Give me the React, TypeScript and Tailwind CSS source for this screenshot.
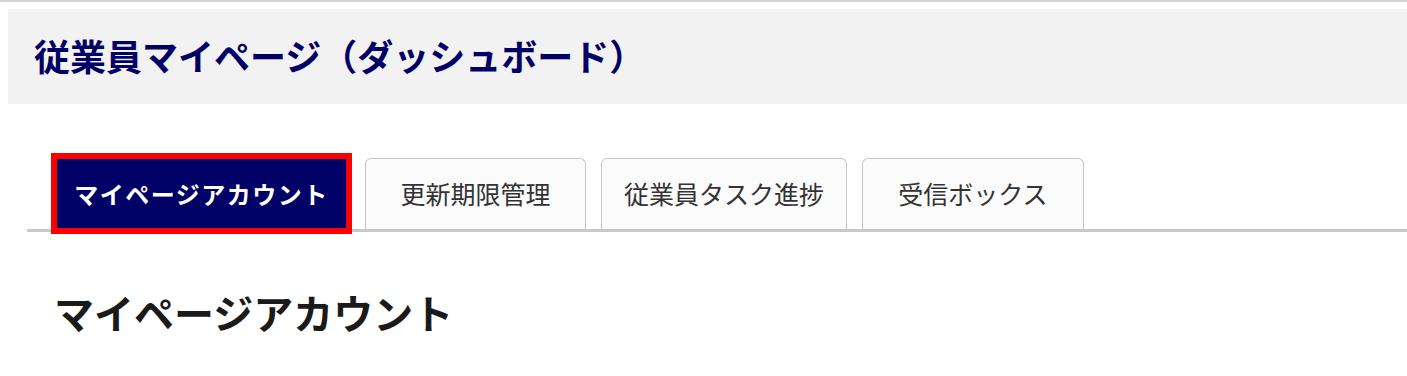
const tabs = [
  { label: "更新期限管理", width: "w-[221px]" },
  { label: "従業員タスク進捗", width: "w-[246px]" },
  { label: "受信ボックス", width: "w-[222px]" },
];

export default function App() {
  return (
    <div
      className="min-h-screen bg-white border-t-2 border-[#d2d2d2]"
      style={{ fontFamily: '"Noto Sans CJK JP", "Noto Sans", sans-serif' }}
    >
      {/* Page header */}
      <div className="ml-[8px] mt-[7px] h-[95px] bg-[#f2f2f2] flex items-center pl-[26px] pb-[4px]">
        <h1 className="text-[36px] font-bold text-[#000066] leading-none">
          従業員マイページ（ダッシュボード）
        </h1>
      </div>

      {/* Tabs */}
      <div className="ml-[27px] mt-[49px] pl-[24px] flex items-end gap-[15px] border-b-[3px] border-[#c8c8c8]">
        <div className="relative z-10 -mb-[5px] -mr-[2px] w-[301px] h-[81px] border-[6px] border-[#ff0000] bg-[#000066] flex items-center justify-center">
          <span className="text-[24px] font-bold text-white tracking-[1.5px] leading-none">
            マイページアカウント
          </span>
        </div>
        {tabs.map((t) => (
          <div
            key={t.label}
            className={`${t.width} h-[71px] border-[1.5px] border-b-0 border-[#c6c6c6] rounded-t-[6px] bg-[#fbfbfb] flex items-center justify-center pb-[2px]`}
          >
            <span className="text-[25px] text-[#333333] leading-none">{t.label}</span>
          </div>
        ))}
      </div>

      {/* Section heading */}
      <h2 className="ml-[54px] mt-[50px] text-[40px] font-bold text-[#1a1a1a] leading-[60px]">
        マイページアカウント
      </h2>
    </div>
  );
}
